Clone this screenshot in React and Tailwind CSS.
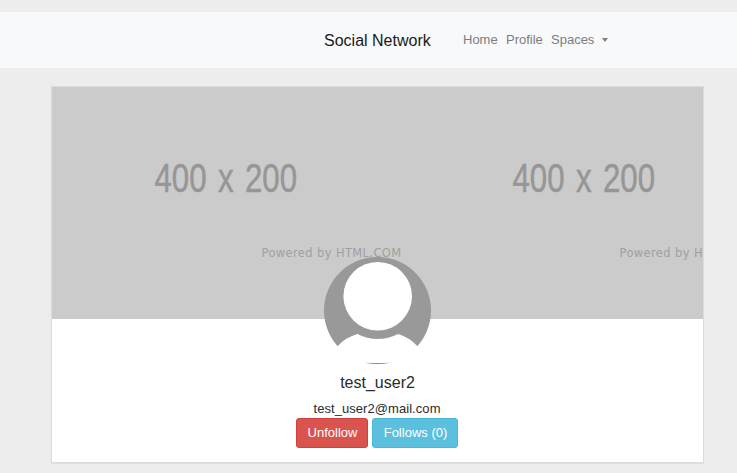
function Placeholder({ x }) {
  return (
    <g transform={`translate(${x} 0)`}>
      <text x="102.5" y="105" fontSize="40" fill="#969696" stroke="#969696" strokeWidth="0.5" wordSpacing="3.5" textLength="142.5" lengthAdjust="spacingAndGlyphs" fontFamily="'Liberation Sans', sans-serif">400 x 200</text>
      <text x="209.5" y="170" fontSize="11.5" fill="#a0a0a0" textLength="140" lengthAdjust="spacingAndGlyphs" letterSpacing="0.4" fontFamily="'DejaVu Sans', sans-serif">Powered by HTML.COM</text>
    </g>
  );
}

function Cover() {
  return (
    <svg className="block h-[232px] w-full bg-[#cbcbcb]" viewBox="0 0 651 232" aria-label="Cover">
      <Placeholder x={0} />
      <Placeholder x={358} />
    </svg>
  );
}

function Avatar() {
  return (
    <svg className="relative -mt-[62px] size-[107px]" viewBox="0 0 107 107" aria-label="Avatar">
      <circle cx="53.5" cy="53.5" r="53.5" fill="#999" />
      <circle cx="53.7" cy="39.2" r="34.3" fill="#fff" />
      <path d="M0 107V89.3H13.5Q22 80 33.5 77Q43 82 53.7 82Q64.5 82 74 77Q85 80 93.5 89.3H107V107Z" fill="#fff" />
      <path d="M41 105.7Q53.5 106.5 66 105.7Q60 107 53.5 107Q47 107 41 105.7Z" fill="#888" />
    </svg>
  );
}

export default function App() {
  return (
    <div className="h-[473px] overflow-hidden bg-[#ededed] pt-3 font-['Liberation_Sans',Arial,sans-serif] text-[13px] text-[#292b2c]">
      <nav className="flex h-14 items-center bg-[#f7f9fb] pl-[324px] whitespace-nowrap">
        <a className="w-[139px] pt-0.5 text-base text-[#1a1a1a]">Social Network</a>
        <div className="flex items-center gap-[9px] text-[#7c7d7e]">
          <a className="w-[34px]">Home</a>
          <a className="w-9">Profile</a>
          <a className="flex items-center gap-[7.5px]">
            Spaces
            <span className="border-x-[3.5px] border-t-[4px] border-x-transparent border-t-[#7c7d7e]" />
          </a>
        </div>
      </nav>
      <main className="mt-[18px] ml-[51px] flex h-[377px] w-[653px] flex-col items-center border border-[#dcdcdc] bg-white shadow-[0_1px_1px_rgba(0,0,0,0.05)]">
        <Cover />
        <Avatar />
        <h1 className="mt-[7px] text-base leading-6">test_user2</h1>
        <p className="mt-1 pr-px leading-5 tracking-[0.06px]">test_user2@mail.com</p>
        <div className="-mt-px flex gap-1 pr-px text-white">
          <button className="h-[30px] w-[72px] rounded-[3px] border border-[#d43f3a] bg-[#d9534f] pl-px text-[13px]">Unfollow</button>
          <button className="h-[30px] w-[86px] rounded-[3px] border border-[#46b8da] bg-[#5bc0de] pl-px text-[13px]">Follows (0)</button>
        </div>
      </main>
    </div>
  );
}
